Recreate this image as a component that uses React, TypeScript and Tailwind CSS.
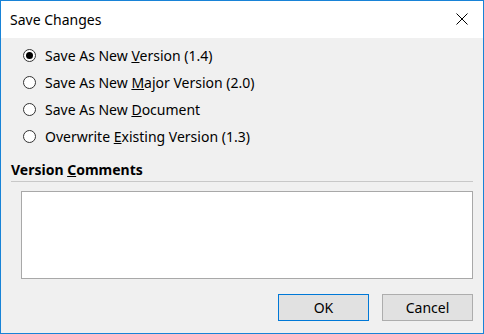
import React from 'react';

const options = [
  { pre: 'Save As New ', key: 'V', post: 'ersion (1.4)', checked: true },
  { pre: 'Save As New ', key: 'M', post: 'ajor Version (2.0)', checked: false },
  { pre: 'Save As New ', key: 'D', post: 'ocument', checked: false },
  { pre: 'Overwrite ', key: 'E', post: 'xisting Version (1.3)', checked: false },
];

function Radio({ checked }: { checked: boolean }) {
  return (
    <div className="w-[13px] h-[13px] rounded-full border border-[#333333] bg-white flex items-center justify-center shrink-0">
      {checked && <div className="w-[7px] h-[7px] rounded-full bg-[#000000]" />}
    </div>
  );
}

export default function App() {
  return (
    <div
      className="w-[484px] h-[334px] border border-[#1883d7] bg-[#f0f0f0] flex flex-col text-[14px] text-black"
      style={{ fontFamily: '"Noto Sans", "Open Sans", sans-serif' }}
    >
      {/* title bar */}
      <div className="h-[37px] bg-white flex items-center justify-between pl-[9px] pr-[15px] shrink-0">
        <span className="leading-none">Save Changes</span>
        <svg width="12" height="12" viewBox="0 0 12 12" className="mt-[-1px]">
          <path d="M0.5 0.5 L11.5 11.5 M11.5 0.5 L0.5 11.5" stroke="#000" strokeWidth="1" />
        </svg>
      </div>

      {/* options */}
      <div className="flex flex-col pt-[4px] pl-[22px]">
        {options.map((o, i) => (
          <div key={i} className="h-[27px] flex items-center gap-[9px]">
            <Radio checked={o.checked} />
            <span className="leading-none">
              {o.pre}
              <u>{o.key}</u>
              {o.post}
            </span>
          </div>
        ))}
      </div>

      {/* comments */}
      <div className="mt-[11px] mx-[10px] h-[21px] border-b border-[#c8c8c8] font-bold leading-[17px]">
        Version <u>C</u>omments
      </div>
      <div className="mt-[9px] ml-[20px] mr-[10px] h-[88px] bg-white border border-[#a8a8a8]" />

      {/* buttons */}
      <div className="mt-[15px] mr-[10px] flex justify-end gap-[13px]">
        <button className="w-[91px] h-[27px] bg-[#e1e1e1] border border-[#0078d7] leading-none">OK</button>
        <button className="w-[91px] h-[27px] bg-[#e1e1e1] border border-[#adadad] leading-none">Cancel</button>
      </div>
    </div>
  );
}
